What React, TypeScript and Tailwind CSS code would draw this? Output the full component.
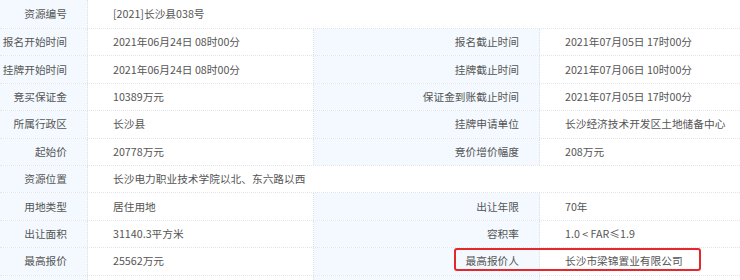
import React from 'react';

type Row =
  | { label: string; value: string; full: true; h?: string }
  | { label: string; value: string; label2: string; value2: string; full?: false; h?: string };

const rows: Row[] = [
  { label: '资源编号', value: '[2021]长沙县038号', full: true, h: 'h-[29px]' },
  { label: '报名开始时间', value: '2021年06月24日 08时00分', label2: '报名截止时间', value2: '2021年07月05日 17时00分' },
  { label: '挂牌开始时间', value: '2021年06月24日 08时00分', label2: '挂牌截止时间', value2: '2021年07月06日 10时00分' },
  { label: '竞买保证金', value: '10389万元', label2: '保证金到账截止时间', value2: '2021年07月05日 17时00分' },
  { label: '所属行政区', value: '长沙县', label2: '挂牌申请单位', value2: '长沙经济技术开发区土地储备中心' },
  { label: '起始价', value: '20778万元', label2: '竞价增价幅度', value2: '208万元' },
  { label: '资源位置', value: '长沙电力职业技术学院以北、东六路以西', full: true },
  { label: '用地类型', value: '居住用地', label2: '出让年限', value2: '70年' },
  { label: '出让面积', value: '31140.3平方米', label2: '容积率', value2: '1.0 < FAR≤1.9' },
  { label: '最高报价', value: '25562万元', label2: '最高报价人', value2: '长沙市梁锦置业有限公司' },
  { label: '', value: '', label2: '', value2: '' },
];

const labelCls =
  'flex items-center justify-end pr-[20px] bg-[#f3f9fe] border-r border-dotted border-[#dfe3e8] whitespace-nowrap';
const valueCls = 'flex items-center pl-[25px] bg-white whitespace-nowrap';

export default function App() {
  return (
    <div
      className="relative w-[740px] h-[280px] overflow-hidden bg-white text-[10.7px] text-[#555]"
      style={{ fontFamily: '"Noto Sans CJK SC", "Noto Sans", sans-serif' }}
    >
      {rows.map((r, i) => (
        <div
          key={i}
          className={`grid grid-cols-[88px_226px_226px_200px] border-b border-dotted border-[#e2e5e9] ${r.h ?? 'h-[27.4px]'}`}
        >
          <div className={labelCls}>{r.label}</div>
          {r.full ? (
            <div className={`${valueCls} col-span-3`}>{r.value}</div>
          ) : (
            <>
              <div className={`${valueCls} border-r border-dotted border-[#dfe3e8]`}>{r.value}</div>
              <div className={labelCls}>{r.label2}</div>
              <div className={`${valueCls} pl-[24px]`}>{r.value2}</div>
            </>
          )}
        </div>
      ))}

      {/* red highlight box */}
      <div className="absolute left-[454px] top-[248px] w-[247px] h-[23px] border-2 border-[#e5262b] rounded-[3px]" />
    </div>
  );
}
